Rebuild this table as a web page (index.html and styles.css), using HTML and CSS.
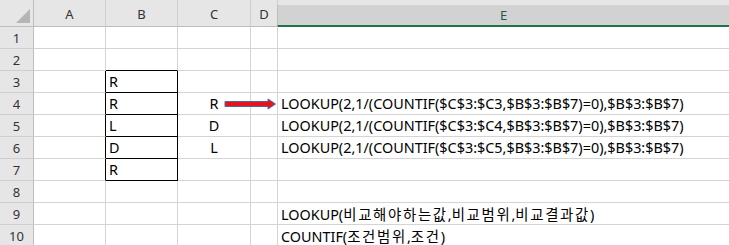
FILE: index.html
```html
<!DOCTYPE html>
<html lang="ko">
<head>
<meta charset="utf-8">
<link rel="stylesheet" href="styles.css">
</head>
<body>
<div class="sheet">
  <div class="grid">
    <div class="corner"><span class="tri"></span></div>
    <div class="ch">A</div>
    <div class="ch">B</div>
    <div class="ch">C</div>
    <div class="ch">D</div>
    <div class="ch sel"><div class="selbar">E</div></div>

    <div class="rh">1</div><div class="c"></div><div class="c"></div><div class="c"></div><div class="c"></div><div class="c e"></div>
    <div class="rh">2</div><div class="c"></div><div class="c bb"></div><div class="c"></div><div class="c"></div><div class="c e"></div>
    <div class="rh">3</div><div class="c br"></div><div class="c box">R</div><div class="c"></div><div class="c"></div><div class="c e"></div>
    <div class="rh">4</div><div class="c br"></div><div class="c box">R</div><div class="c mid">R</div><div class="c"></div><div class="c e">LOOKUP(2,1/(COUNTIF($C$3:$C3,$B$3:$B$7)=0),$B$3:$B$7)</div>
    <div class="rh">5</div><div class="c br"></div><div class="c box">L</div><div class="c mid">D</div><div class="c"></div><div class="c e">LOOKUP(2,1/(COUNTIF($C$3:$C4,$B$3:$B$7)=0),$B$3:$B$7)</div>
    <div class="rh">6</div><div class="c br"></div><div class="c box">D</div><div class="c mid">L</div><div class="c"></div><div class="c e">LOOKUP(2,1/(COUNTIF($C$3:$C5,$B$3:$B$7)=0),$B$3:$B$7)</div>
    <div class="rh">7</div><div class="c br"></div><div class="c box">R</div><div class="c"></div><div class="c"></div><div class="c e"></div>
    <div class="rh">8</div><div class="c"></div><div class="c"></div><div class="c"></div><div class="c"></div><div class="c e"></div>
    <div class="rh">9</div><div class="c"></div><div class="c"></div><div class="c"></div><div class="c"></div><div class="c e">LOOKUP(<span class="ko">비교해야하는값</span>,<span class="ko">비교범위</span>,<span class="ko">비교결과값</span>)</div>
    <div class="rh">10</div><div class="c"></div><div class="c"></div><div class="c"></div><div class="c"></div><div class="c e">COUNTIF(<span class="ko">조건범위</span>,<span class="ko">조건</span>)</div>
  </div>
  <svg class="arrow" width="53" height="12" viewBox="0 0 53 12">
    <polygon points="1,3.5 44,3.5 44,1 51.5,6 44,11 44,8.5 1,8.5" fill="#e8141c" stroke="#4c67a3" stroke-width="1"/>
  </svg>
</div>
</body>
</html>
```

FILE: styles.css
```css
html, body {
  margin: 0;
  padding: 0;
  background: #ffffff;
}

.sheet {
  position: relative;
  width: 729px;
  height: 245px;
  overflow: hidden;
  font-family: "Noto Sans", "Noto Sans CJK KR", sans-serif;
  color: #000;
}

.grid {
  display: grid;
  grid-template-columns: 34px 72px 72px 73px 27px 1fr;
  grid-template-rows: 27px repeat(10, 22px);
}

.grid > div {
  box-sizing: border-box;
}

.corner {
  background: #e6e6e6;
  border-right: 1px solid #bdbdbd;
  border-bottom: 1px solid #bdbdbd;
  position: relative;
}

.tri {
  position: absolute;
  right: 3px;
  bottom: 3px;
  width: 0;
  height: 0;
  border-left: 14px solid transparent;
  border-bottom: 14px solid #b5b5b5;
}

.ch {
  background: #e6e6e6;
  border-right: 1px solid #cfcfcf;
  border-bottom: 1px solid #bdbdbd;
  font-size: 13px;
  color: #333;
  display: flex;
  align-items: center;
  justify-content: center;
  padding-top: 1px;
}

.ch.sel {
  border-right: none;
  border-bottom: 1px solid #217346;
  padding-top: 5px;
  align-items: stretch;
  justify-content: stretch;
}

.selbar {
  flex: 1;
  background: #d2d2d2;
  border-bottom: 1px solid #217346;
  border-left: 1px solid #bdbdbd;
  margin-left: -1px;
  display: flex;
  align-items: center;
  justify-content: center;
  color: #1e5a48;
}

.rh {
  background: #e6e6e6;
  border-right: 1px solid #bdbdbd;
  border-bottom: 1px solid #cfcfcf;
  font-size: 13px;
  color: #333;
  display: flex;
  align-items: center;
  justify-content: center;
}

.c {
  border-right: 1px solid #d4d4d4;
  border-bottom: 1px solid #d4d4d4;
  font-size: 14.4px;
  line-height: 21px;
  padding-left: 3px;
  white-space: nowrap;
}

.c.e {
  border-right: none;
  padding-left: 3px;
}

.ko {
  font-family: "Noto Sans CJK KR", sans-serif;
  letter-spacing: 1.7px;
}

.c.mid {
  text-align: center;
  padding-left: 0;
}

.c.br {
  border-right-color: #000;
}

.c.bb {
  border-bottom-color: #000;
}

.c.box {
  border-right-color: #000;
  border-bottom-color: #000;
}

.arrow {
  position: absolute;
  left: 224px;
  top: 98px;
}
```
